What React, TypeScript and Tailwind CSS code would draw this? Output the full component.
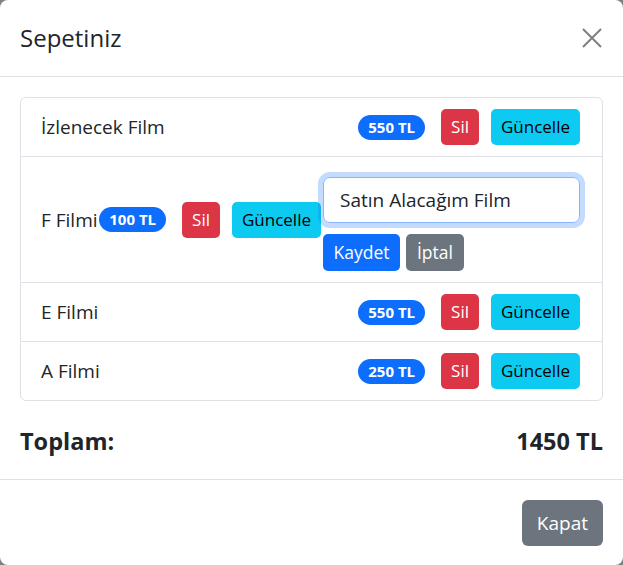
import React from 'react'

type Item = { name: string; price: number; editing?: boolean }

const items: Item[] = [
  { name: 'İzlenecek Film', price: 550 },
  { name: 'F Filmi', price: 100, editing: true },
  { name: 'E Filmi', price: 550 },
  { name: 'A Filmi', price: 250 },
]

const Badge = ({ price }: { price: number }) => (
  <span className="inline-flex items-center whitespace-nowrap shrink-0 h-[25px] px-[10px] rounded-full bg-[#0d6efd] text-white text-[15px] font-bold leading-none">
    {price} TL
  </span>
)

const Row = ({ item, last }: { item: Item; last: boolean }) => (
  <li
    className={`flex items-center justify-between pl-5 pr-[22px] py-[11px] ${last ? '' : 'border-b border-[#dee2e6]'}`}
  >
    <span className="text-[19px] leading-[30px] whitespace-nowrap shrink-0">{item.name}</span>
    <div className="flex items-center min-w-0">
      <Badge price={item.price} />
      <button className="ml-4 shrink-0 h-9 px-[10px] rounded-[5px] bg-[#dc3545] text-white text-[17px]">Sil</button>
      <button className="ml-3 shrink-0 h-9 px-[10px] rounded-[5px] bg-[#0dcaf0] text-black text-[17px]">Güncelle</button>
      {item.editing && (
        <div className="ml-0.5 pt-[9px] w-[257px] min-w-0">
          <input
            defaultValue="Satın Alacağım Film"
            className="w-full h-[46px] px-4 text-[19px] rounded-[7px] border border-[#86b7fe] outline-none shadow-[0_0_0_5px_rgba(13,110,253,0.25)] text-[#212529]"
          />
          <div className="mt-[11px] flex gap-[6px]">
            <button className="h-[37px] px-[10.5px] rounded-[5px] bg-[#0d6efd] text-white text-[17.5px]">Kaydet</button>
            <button className="h-[37px] px-[11px] rounded-[5px] bg-[#6c757d] text-white text-[17.5px]">İptal</button>
          </div>
        </div>
      )}
    </div>
  </li>
)

export default function App() {
  const total = items.reduce((s, i) => s + i.price, 0)
  return (
    <div className="w-[623px] h-[565px] bg-[#808080]" style={{ fontFamily: '"Open Sans", "Noto Sans", sans-serif' }}>
      <div className="w-full h-full bg-white rounded-[8px] flex flex-col text-[#212529]">
        <div className="h-[77px] flex items-center justify-between px-5 border-b border-[#dee2e6]">
          <h5 className="text-[24px] leading-[36px]">Sepetiniz</h5>
          <button className="w-5 h-5 mr-[1px] text-[#7f7f7f]">
            <svg viewBox="0 0 20 20" className="w-5 h-5" stroke="currentColor" strokeWidth="2">
              <path d="M1 1 L19 19 M19 1 L1 19" />
            </svg>
          </button>
        </div>
        <div className="px-5 pt-5 pb-5">
          <ul className="border border-[#dee2e6] rounded-[6px]">
            {items.map((it, i) => (
              <Row key={it.name} item={it} last={i === items.length - 1} />
            ))}
          </ul>
          <div className="mt-[22px] flex justify-between text-[23.5px] font-bold leading-[36px]">
            <span>Toplam:</span>
            <span>{total} TL</span>
          </div>
        </div>
        <div className="flex-1 border-t border-[#dee2e6] flex items-start justify-end px-5 pt-5">
          <button className="h-[46px] px-[15px] rounded-[6px] bg-[#6c757d] text-white text-[19px]">Kapat</button>
        </div>
      </div>
    </div>
  )
}
